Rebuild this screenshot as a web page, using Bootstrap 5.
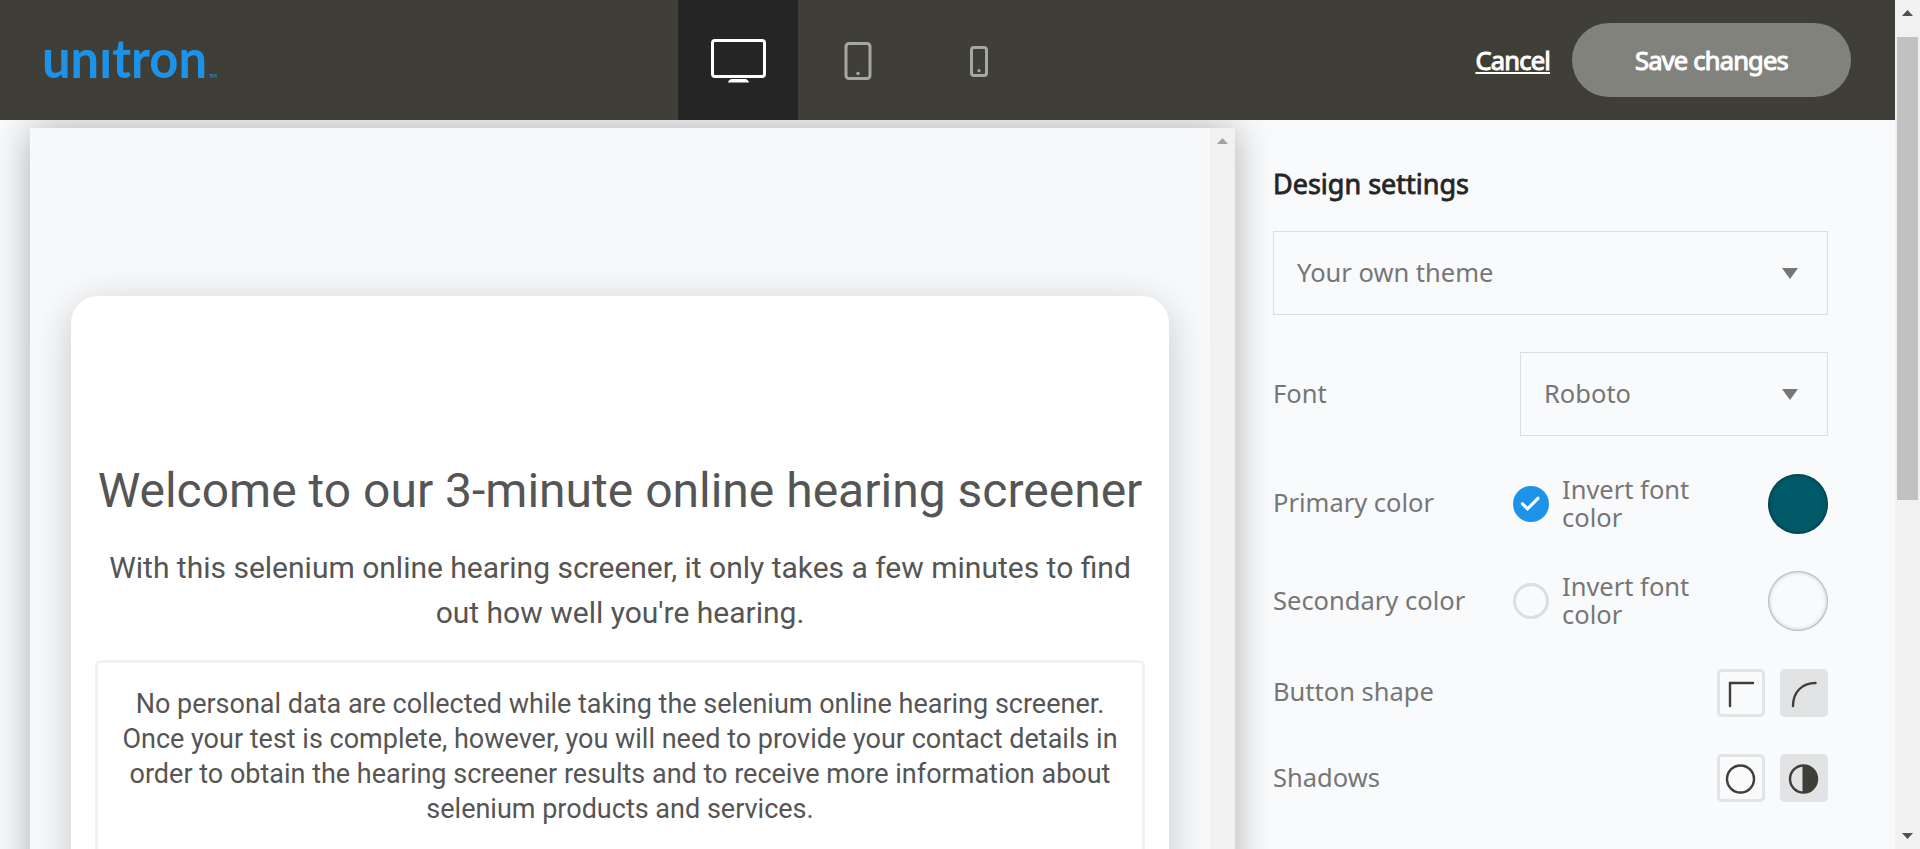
<!DOCTYPE html>
<html lang="en">
<head>
<meta charset="utf-8">
<meta name="viewport" content="width=device-width, initial-scale=1">
<title>Design settings</title>
<link href="https://cdn.jsdelivr.net/npm/bootstrap@5.3.0/dist/css/bootstrap.min.css" rel="stylesheet">
<style>
  body { background: #f9fafc; font-family: "Noto Sans", sans-serif; font-size: 25.5px; color: #767676; height: 849px; }
  .app-shell { height: 849px; }
  .top-bar { height: 120px; background: #403f37; z-index: 2; flex: none; }
  .brand-side { width: 678px; flex: none; }
  .brand-logo { margin-left: 45px; overflow: visible; }
  .device-tab { width: 120px; height: 120px; margin-right: .4px; }
  .device-tab.active { background: #252525; }
  .bar-link, .save-btn { color: #fff; -webkit-text-stroke: 1px #fff; font-size: 25.5px; letter-spacing: -.8px; }
  .bar-link { text-underline-offset: 2px; text-decoration-thickness: 2px; }
  .save-btn { width: 279px; height: 74px; background: #82827d; margin-right: 44px; margin-left: 22px; padding-top: 7px; }
  .preview-pane { width: 1205px; margin: 8px 0 0 30px; background: #f7f9fb; box-shadow: 0 0 36px rgba(0,0,0,.3); flex: none; }
  .preview-view { padding: 168px 41px 0; font-family: Roboto, sans-serif; color: #555; }
  .welcome { border-radius: 27px; box-shadow: 0 9px 42px rgba(0,0,0,.2); height: 700px; padding: 166px 24px 0; }
  .welcome h1 { font-size: 48px; line-height: 58px; margin: 0 -20px; font-weight: 400; white-space: nowrap; }
  .welcome .intro { font-size: 30px; line-height: 45px; margin: 25px -10px 25px; }
  .notice { border: 3px solid #f2f2f2; border-radius: 6px; height: 300px; font-size: 27px; line-height: 35px; padding: 24px 0; }
  .rail { width: 25px; background: #f1f1f1; flex: none; }
  .rail .thumb { width: 21px; height: 463px; background: #c1c1c1; margin-top: 21px; }
  .settings { width: 555px; margin-left: 38px; padding-top: 41px; }
  .settings h2 { font-size: 27px; line-height: 46px; color: #252525; font-weight: 400; -webkit-text-stroke: .8px #252525; margin: 0 0 24px; }
  .select-box { height: 84px; border: 1px solid #dcdde0; padding: 0 29px 0 23px; }
  .font-select { width: 308px; }
  .field-label { padding-bottom: 2px; }
  .setting-row { margin-top: 37px; }
  .setting-row + .setting-row { margin-top: 37.5px; }
  .invert { width: 255px; line-height: 28px; gap: 13px; }
  .swatch { width: 60px; height: 60px; box-shadow: inset 0 0 5px rgba(0,0,0,.3), inset 0 0 1px 1px rgba(0,0,0,.15); }
  .swatch-primary { background: #005a68; }
  .swatch-secondary { background: #f9fafc; }
  .tick { width: 36px; height: 36px; flex: none; }
  .opt { width: 48px; height: 48px; border: 3px solid #e2e3e5; border-radius: 5px; }
  .opt + .opt { margin-left: 15px; }
  .opt.active { background: #e2e3e5; }
</style>
</head>
<body class="overflow-hidden">
<div class="app-shell d-flex">
  <div class="d-flex flex-column flex-grow-1 overflow-hidden">
    <header class="top-bar d-flex align-items-center position-relative">
      <div class="brand-side">
        <svg class="brand-logo d-block" width="176" height="60" viewBox="0 0 176 60" fill="#1c93e8">
          <text x="-3" y="48" font-family="Lato" font-weight="700" font-size="53" textLength="165" lengthAdjust="spacingAndGlyphs">unıtron</text>
          <text x="164" y="48" font-family="Lato" font-size="6" textLength="8">TM</text>
        </svg>
      </div>
      <nav class="d-flex">
        <a class="device-tab active d-flex align-items-center justify-content-center" href="#" aria-label="Desktop">
          <svg width="56" height="46" viewBox="0 0 56 46" fill="none"><rect x="2.5" y="3.5" width="52" height="36" rx="2.5" stroke="#fff" stroke-width="3"/><path d="M18 45.500q1-3.500 4-3.500h13q3 0 4 3.500z" fill="#fff"/></svg>
        </a>
        <a class="device-tab d-flex align-items-center justify-content-center" href="#" aria-label="Tablet">
          <svg width="28" height="40" viewBox="0 0 28 40" fill="none"><rect x="2" y="3.5" width="24" height="35" rx="3" stroke="#a6a6a3" stroke-width="3"/><circle cx="14" cy="33.5" r="1.7" fill="#a6a6a3"/></svg>
        </a>
        <a class="device-tab d-flex align-items-center justify-content-center" href="#" aria-label="Phone">
          <svg width="20" height="36" viewBox="0 0 20 36" fill="none"><rect x="2.5" y="5.5" width="15" height="28" rx="2.5" stroke="#a6a6a3" stroke-width="3"/><circle cx="10" cy="28.700" r="1.6" fill="#a6a6a3"/></svg>
        </a>
      </nav>
      <div class="d-flex align-items-center ms-auto">
        <a class="bar-link" href="#">Cancel</a>
        <button class="save-btn btn rounded-pill border-0">Save changes</button>
      </div>
    </header>
    <main class="d-flex flex-grow-1">
      <section class="preview-pane d-flex">
        <div class="preview-view flex-grow-1 text-center overflow-hidden">
          <div class="welcome bg-white">
            <h1>Welcome to our 3-minute online hearing screener</h1>
            <p class="intro">With this selenium online hearing screener, it only takes a few minutes to find<br>out how well you're hearing.</p>
            <div class="notice">No personal data are collected while taking the selenium online hearing screener.<br>Once your test is complete, however, you will need to provide your contact details in<br>order to obtain the hearing screener results and to receive more information about<br>selenium products and services.</div>
          </div>
        </div>
        <div class="rail d-flex justify-content-center">
          <svg width="25" height="25" viewBox="0 0 25 25"><path d="M7 16l5.500-6 5.500 6z" fill="#a3a3a3"/></svg>
        </div>
      </section>
      <section class="settings">
        <h2>Design settings</h2>
        <div class="select-box d-flex align-items-center justify-content-between"><span class="field-label">Your own theme</span>
          <svg width="16" height="11" viewBox="0 0 16 11"><path d="M0 0h16L8 11z" fill="#767676"/></svg></div>
        <div class="setting-row d-flex align-items-center justify-content-between">
          <span class="field-label">Font</span>
          <div class="select-box font-select d-flex align-items-center justify-content-between"><span class="field-label">Roboto</span>
            <svg width="16" height="11" viewBox="0 0 16 11"><path d="M0 0h16L8 11z" fill="#767676"/></svg></div>
        </div>
        <div class="setting-row d-flex align-items-center">
          <span class="field-label me-auto">Primary color</span>
          <div class="invert d-flex align-items-center">
            <svg class="tick" viewBox="0 0 36 36"><circle cx="18" cy="18" r="18" fill="#1c93e8"/><path d="M9.500 17.800l5 5 10.500-10.500" fill="none" stroke="#fff" stroke-width="3.200" stroke-linecap="round"/></svg>
            <span class="field-label">Invert font<br>color</span>
          </div>
          <div class="swatch swatch-primary rounded-circle"></div>
        </div>
        <div class="setting-row d-flex align-items-center">
          <span class="field-label me-auto">Secondary color</span>
          <div class="invert d-flex align-items-center">
            <svg class="tick" viewBox="0 0 36 36"><circle cx="18" cy="18" r="16.500" fill="none" stroke="#d9dfe3" stroke-width="3"/></svg>
            <span class="field-label">Invert font<br>color</span>
          </div>
          <div class="swatch swatch-secondary rounded-circle"></div>
        </div>
        <div class="setting-row d-flex align-items-center">
          <span class="field-label me-auto">Button shape</span>
          <div class="opt d-flex"><svg width="42" height="42" viewBox="0 0 42 42" fill="none" stroke="#403f37" stroke-width="2.400" stroke-linecap="round"><path d="M10 34V11h23"/></svg></div>
          <div class="opt active d-flex"><svg width="42" height="42" viewBox="0 0 42 42" fill="none" stroke="#403f37" stroke-width="2.400" stroke-linecap="round"><path d="M10 34C10 20 19 11 32.500 11"/></svg></div>
        </div>
        <div class="setting-row d-flex align-items-center">
          <span class="field-label me-auto">Shadows</span>
          <div class="opt d-flex"><svg width="42" height="42" viewBox="0 0 42 42" fill="none" stroke="#403f37" stroke-width="2.400"><circle cx="20.500" cy="22" r="13.500"/></svg></div>
          <div class="opt active d-flex"><svg width="42" height="42" viewBox="0 0 42 42" fill="none" stroke="#403f37" stroke-width="2.400"><circle cx="20.500" cy="22" r="13.500"/><path d="M19.500 8.500h1a13.500 13.500 0 010 27h-1z" fill="#403f37" stroke="none"/></svg></div>
        </div>
      </section>
    </main>
  </div>
  <div class="rail d-flex flex-column align-items-center">
    <svg width="25" height="16" viewBox="0 0 25 16"><path d="M7 16l5.500-6 5.500 6z" fill="#505050"/></svg>
    <div class="thumb"></div>
    <svg class="mt-auto" width="25" height="16" viewBox="0 0 25 16"><path d="M7 0l5.500 6L18 0z" fill="#505050"/></svg>
  </div>
</div>
<script src="https://cdn.jsdelivr.net/npm/bootstrap@5.3.0/dist/js/bootstrap.bundle.min.js"></script>
</body>
</html>
